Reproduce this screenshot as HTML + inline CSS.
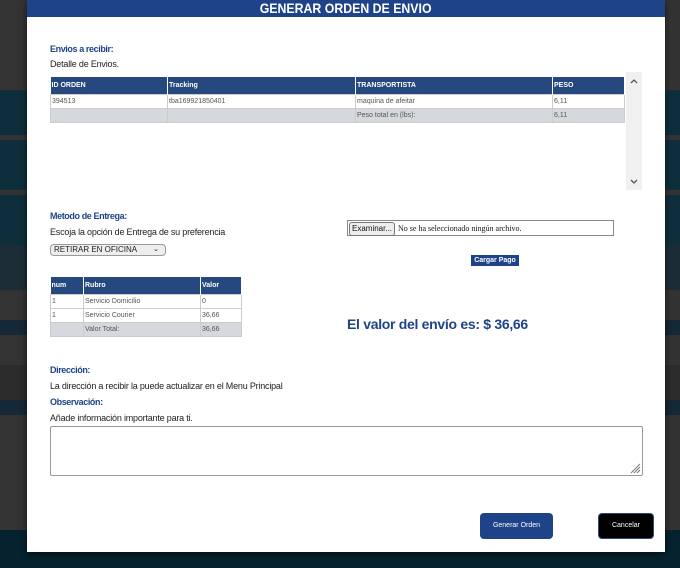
<!DOCTYPE html>
<html><head><meta charset="utf-8"><style>
*{box-sizing:border-box;margin:0;padding:0}
body{width:680px;height:568px;overflow:hidden;background:#333;font-family:"Liberation Sans",sans-serif;position:relative}
.s{position:absolute;left:0;width:680px}
.m{position:absolute;left:27px;top:0;width:638px;height:552px;background:#fff;box-shadow:0 2px 6px rgba(0,0,0,.6)}
.hd{height:17px;background:#1e4388;color:#fff;text-align:center;font:bold 14px/17px "Liberation Sans Narrow","Liberation Sans",sans-serif}
.hd span{display:inline-block;transform:scaleX(.88)}
.a{position:absolute}
.lbl{color:#1e4388;font-weight:bold;font-size:9px;letter-spacing:-.4px}
.t{font-size:9px;color:#222;letter-spacing:-.2px}
table{border-collapse:collapse;position:absolute;font-size:7px;color:#555}
th{background:#25487f;color:#fff;text-align:left;font-weight:bold;height:17px;padding-left:1px;border-right:1px solid #fff}
td{height:14px;padding-left:1px;border:1px solid #ccc}
tr.g td{background:#d5d8dc}
</style></head><body>
<div class="s" style="top:90px;height:45px;background:#0e2e3c"></div>
<div class="s" style="top:140px;height:50px;background:#0e2e3c"></div>
<div class="s" style="top:195px;height:50px;background:#0e2e3c"></div>
<div class="s" style="top:245px;height:45px;background:#1d2d38"></div>
<div class="s" style="top:320px;height:15px;background:#142838"></div>
<div class="s" style="top:365px;height:35px;background:#2c2c2c"></div>
<div class="s" style="top:400px;height:15px;background:#142838"></div>
<div class="s" style="top:530px;height:38px;background:#06222e"></div>
<div class="m">
<div class="hd"><span>GENERAR ORDEN DE ENVIO</span></div>
<div class="a lbl" style="left:23px;top:44px">Envios a recibir:</div>
<div class="a t" style="left:23px;top:59px">Detalle de Envios.</div>
<table style="left:23px;top:77px;width:575px">
<tr><th style="width:117px">ID ORDEN</th><th style="width:188px">Tracking</th><th style="width:197px">TRANSPORTISTA</th><th>PESO</th></tr>
<tr><td>394513</td><td>tba169921850401</td><td>maquina de afeitar</td><td>6,11</td></tr>
<tr class="g"><td></td><td></td><td>Peso total en (lbs):</td><td>6,11</td></tr>
</table>
<div class="a" style="left:599px;top:72px;width:16px;height:118px;background:#f0f0f0">
<svg width="16" height="118" style="position:absolute;left:0;top:0"><path d="M5 11 L8 8 L11 11" stroke="#555" stroke-width="1.3" fill="none"/><path d="M5 108 L8 111 L11 108" stroke="#555" stroke-width="1.3" fill="none"/></svg></div>
<div class="a lbl" style="left:23px;top:211px">Metodo de Entrega:</div>
<div class="a t" style="left:23px;top:227px">Escoja la opción de Entrega de su preferencia</div>
<div class="a" style="left:23px;top:244px;width:116px;height:12px;border:1px solid #999;border-radius:4px;background:#eee;font-size:8px;line-height:10px;padding-left:3px;color:#222">RETIRAR EN OFICINA <span style="position:absolute;right:6px;font-size:7px">⌄</span></div>
<table style="left:23px;top:277px;width:192px">
<tr><th style="width:33px">num</th><th style="width:117px">Rubro</th><th>Valor</th></tr>
<tr><td>1</td><td>Servicio Domicilio</td><td>0</td></tr>
<tr><td>1</td><td>Servicio Courier</td><td>36,66</td></tr>
<tr class="g"><td></td><td>Valor Total:</td><td>36,66</td></tr>
</table>
<div class="a" style="left:320px;top:220px;width:267px;height:16px;border:1px solid #888;font:8px/14px 'Liberation Serif',serif;color:#111"><span style="display:inline-block;border:1px solid #777;border-radius:3px;background:#eee;padding:0 2px;line-height:12px;margin:1px 3px 0 1px;font-family:'Liberation Sans';font-size:8px">Examinar...</span>No se ha seleccionado ningún archivo.</div>
<div class="a" style="left:444px;top:255px;width:48px;height:11px;background:#1e4388;color:#fff;font:bold 7px/11px 'Liberation Sans';text-align:center">Cargar Pago</div>
<div class="a" style="left:320px;top:316px;color:#1e4388;font-weight:bold;font-size:14px;letter-spacing:-.3px">El valor del envío es: $ 36,66</div>
<div class="a lbl" style="left:23px;top:365px">Dirección:</div>
<div class="a t" style="left:23px;top:381px">La dirección a recibir la puede actualizar en el Menu Principal</div>
<div class="a lbl" style="left:23px;top:397px">Observación:</div>
<div class="a t" style="left:23px;top:413px">Añade información importante para ti.</div>
<div class="a" style="left:23px;top:426px;width:593px;height:50px;border:1px solid #999;border-radius:2px">
<svg width="12" height="12" style="position:absolute;right:1px;bottom:1px"><path d="M11 2 L2 11 M11 5 L5 11 M11 8 L8 11" stroke="#777" stroke-width="1"/></svg></div>
<div class="a" style="left:453px;top:513px;width:73px;height:26px;background:#1e4388;border-radius:4px;color:#fff;font-size:7px;line-height:26px;text-align:center">Generar Orden</div>
<div class="a" style="left:571px;top:513px;width:56px;height:26px;background:#000;border:1px solid #2a4a7a;border-radius:4px;color:#fff;font-size:7px;line-height:24px;text-align:center">Cancelar</div>
</div>
</body></html>
